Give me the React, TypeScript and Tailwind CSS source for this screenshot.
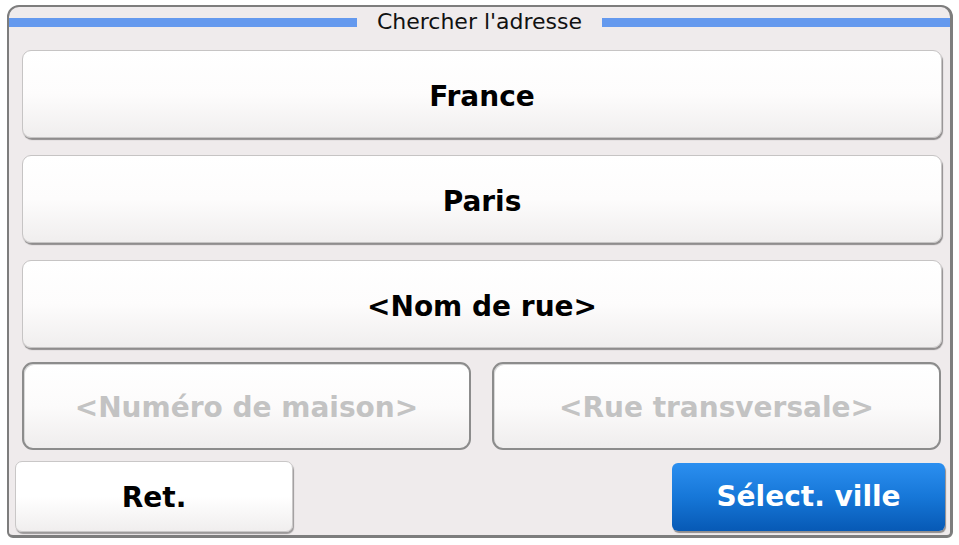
export default function App() {
  const font = { fontFamily: '"DejaVu Sans", Verdana, sans-serif' };

  return (
    <div className="w-[959px] h-[545px] bg-white" style={font}>
      <div className="absolute left-[7px] top-[5px] w-[946px] h-[533px] rounded-t-[12px] rounded-b-[6px] border-2 border-[#7d7d7d] border-r-[3px] border-b-[3px] bg-[#efebec] flex flex-col">
        {/* title */}
        <div className="h-[43px] flex items-start pt-[10px]">
          <div className="flex-1 h-[9px] bg-[#6499ee] mt-[1px]" />
          <div className="px-[20px] text-[22px] leading-[22px] text-[#111] -mt-[6px]">Chercher l'adresse</div>
          <div className="flex-1 h-[9px] bg-[#6499ee] mt-[1px]" />
        </div>

        <div className="flex flex-col gap-[17px] pl-[13px] pr-[8px]">
          <Field label="France" />
          <Field label="Paris" />
          <Field label="<Nom de rue>" />
        </div>

        <div className="flex gap-[21px] pl-[13px] pr-[9px] mt-[14px]">
          <Disabled label="<Numéro de maison>" />
          <Disabled label="<Rue transversale>" />
        </div>

        <div className="flex justify-between pl-[6px] pr-[5px] mt-[11px]">
          <button className="w-[278px] h-[71px] pt-[3px] rounded-[7px] border border-[#c9c7c7] bg-gradient-to-b from-white via-white to-[#f0eeee] shadow-[1px_2px_1px_rgba(0,0,0,0.35)] text-[28px] font-bold text-black">
            Ret.
          </button>
          <button className="mt-[2px] w-[273px] h-[68px] rounded-[6px] bg-gradient-to-b from-[#2b8ff0] via-[#1677d8] to-[#0759b5] shadow-[1px_2px_1px_rgba(0,0,0,0.4)] text-[28px] font-bold text-white">
            Sélect. ville
          </button>
        </div>
      </div>
    </div>
  );
}

function Field({ label }: { label: string }) {
  return (
    <button className="w-full h-[88px] pt-[5px] rounded-[9px] border border-[#c6c4c4] bg-gradient-to-b from-white via-[#fdfcfc] to-[#f0eeee] shadow-[1px_2px_1px_rgba(0,0,0,0.4)] text-[28px] font-bold text-black">
      {label}
    </button>
  );
}

function Disabled({ label }: { label: string }) {
  return (
    <div className="flex-1 h-[88px] pt-[4px] rounded-[11px] border-2 border-[#8c8c8c] bg-gradient-to-b from-white via-[#fcfbfb] to-[#efeded] shadow-[inset_1px_1px_0_#d8d8d8] flex items-center justify-center text-[28px] font-bold text-[#c3c3c3]">
      {label}
    </div>
  );
}
